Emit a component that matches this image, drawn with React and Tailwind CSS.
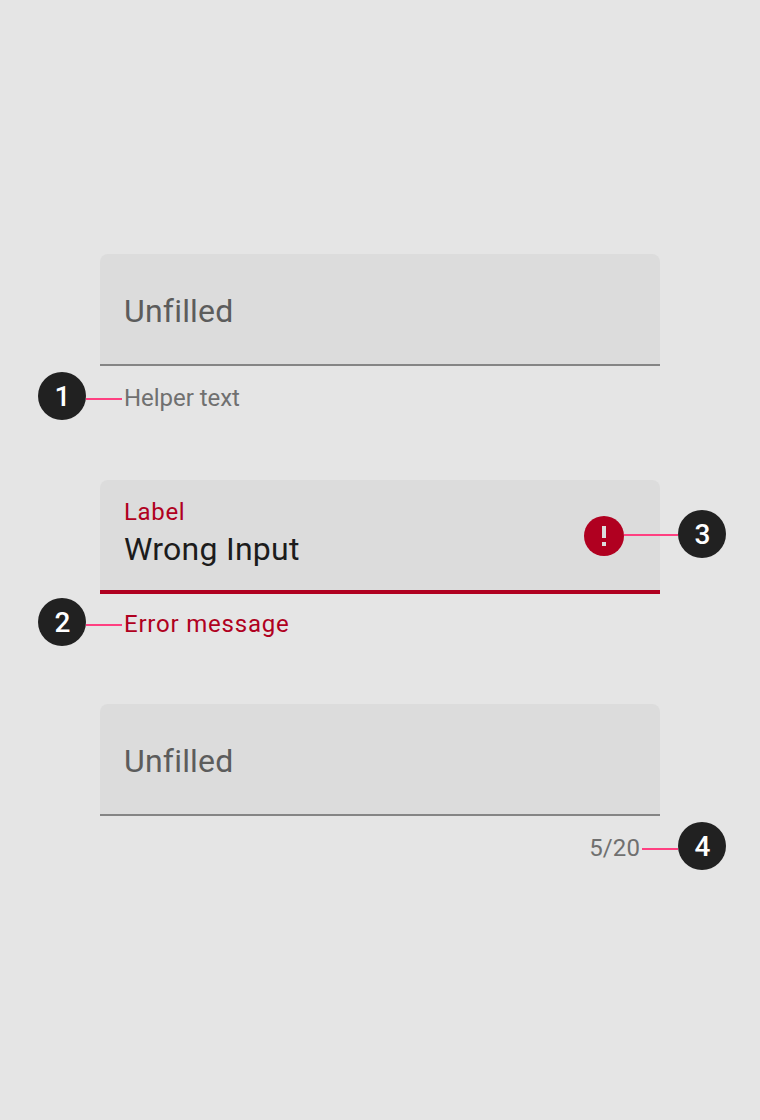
function Marker({ n }) {
  return (
    <span className="flex h-12 w-12 shrink-0 items-center justify-center rounded-full bg-[#212121] pt-0.5 pl-px text-[28px] leading-8 font-medium text-white">
      {n}
    </span>
  );
}

function Lead() {
  return <span className="mt-1.5 h-0.5 w-9 shrink-0 bg-[#ff4081]" />;
}

function EmptyField() {
  return (
    <div className="mx-[100px] flex h-28 items-center rounded-t-lg border-b-2 border-[#858585] bg-[#dcdcdc] px-6 pt-1 text-[32px] leading-10 tracking-[0.2px] text-[#5c5c5c]">
      Unfilled
    </div>
  );
}

export default function App() {
  return (
    <main className="flex h-[1120px] w-[760px] flex-col bg-[#e5e5e5] pt-[254px] font-['Roboto',sans-serif]">
      <section className="h-[226px]">
        <EmptyField />
        <div className="mt-1.5 flex items-center pl-[38px]">
          <Marker n="1" />
          <Lead />
          <span className="mt-1 ml-0.5 text-2xl tracking-[-0.04px] text-[#707070]">Helper text</span>
        </div>
      </section>

      <section className="h-[224px]">
        <div className="flex">
          <div className="ml-[100px] flex h-[114px] w-[560px] justify-between rounded-t-lg border-b-4 border-[#b00020] bg-[#dcdcdc] pl-6">
            <div className="pt-4">
              <div className="text-2xl tracking-[0.65px] text-[#b00020]">Label</div>
              <div className="mt-[1px] text-[32px] leading-10 tracking-[0.25px] text-[#1c1c1c]">Wrong Input</div>
            </div>
            <div className="flex pt-9">
              <svg className="h-10 w-10" viewBox="0 0 40 40">
                <circle cx="20" cy="20" r="20" fill="#b00020" />
                <path d="M18 10h4v12h-4zM18 26h4v4h-4z" fill="#dcdcdc" />
              </svg>
              <span className="mt-[18px] h-0.5 w-9 bg-[#ff4081]" />
            </div>
          </div>
          <div className="flex pt-[30px]">
            <span className="mt-6 h-0.5 w-[18px] bg-[#ff4081]" />
            <Marker n="3" />
          </div>
        </div>
        <div className="mt-1 flex items-center pl-[38px]">
          <Marker n="2" />
          <Lead />
          <span className="mt-1 ml-0.5 text-2xl tracking-[0.8px] text-[#b00020]">Error message</span>
        </div>
      </section>

      <section>
        <EmptyField />
        <div className="mt-1.5 flex items-center justify-end pr-[34px]">
          <span className="mt-1 mr-0.5 text-2xl tracking-[0.1px] text-[#707070]">5/20</span>
          <Lead />
          <Marker n="4" />
        </div>
      </section>
    </main>
  );
}
